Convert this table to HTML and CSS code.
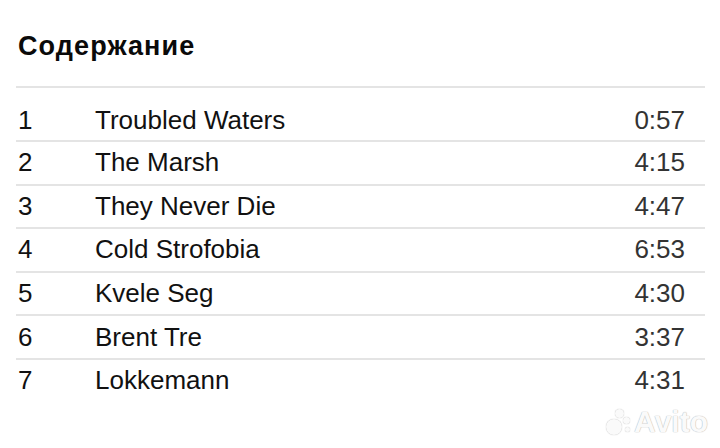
FILE: index.html
```html
<!DOCTYPE html>
<html>
<head>
<meta charset="utf-8">
<link rel="stylesheet" href="styles.css">
</head>
<body>
<div class="page">
  <h1 class="title">Содержание</h1>
  <div class="tracks">
    <div class="row first"><span class="num">1</span><span class="name">Troubled Waters</span><span class="time">0:57</span></div>
    <div class="row"><span class="num">2</span><span class="name">The Marsh</span><span class="time">4:15</span></div>
    <div class="row"><span class="num">3</span><span class="name">They Never Die</span><span class="time">4:47</span></div>
    <div class="row"><span class="num">4</span><span class="name">Cold Strofobia</span><span class="time">6:53</span></div>
    <div class="row"><span class="num">5</span><span class="name">Kvele Seg</span><span class="time">4:30</span></div>
    <div class="row"><span class="num">6</span><span class="name">Brent Tre</span><span class="time">3:37</span></div>
    <div class="row last"><span class="num">7</span><span class="name">Lokkemann</span><span class="time">4:31</span></div>
  </div>
  <div class="watermark">
    <span class="dots"><i class="d1"></i><i class="d2"></i><i class="d3"></i><i class="d4"></i></span>
    <span class="wm-text">Avito</span>
  </div>
</div>
</body>
</html>
```
FILE: styles.css
```css
html, body {
  margin: 0;
  padding: 0;
  background: #ffffff;
}
body {
  width: 720px;
  height: 448px;
  overflow: hidden;
  font-family: "Liberation Sans", Arial, sans-serif;
  color: #111;
}
.page {
  position: relative;
  height: 448px;
  padding: 0 15px 0 16px;
}
.title {
  margin: 0;
  padding: 31px 0 0 2px;
  height: 86px;
  box-sizing: border-box;
  font-size: 27px;
  letter-spacing: 1.1px;
  font-weight: bold;
  line-height: 30px;
  color: #0a0a0a;
}
.tracks {
  border-top: 2px solid #e4e4e4;
}
.row {
  display: flex;
  align-items: center;
  height: 41.6px;
  border-bottom: 2px solid #e4e4e4;
  font-size: 26px;
  color: #111;
}
.row.first {
  height: 54px;
  padding-top: 12px;
  box-sizing: border-box;
}
.row.last {
  border-bottom: none;
}
.num {
  width: 77px;
  padding-left: 2px;
}
.name {
  flex: 1;
}
.time {
  color: #333;
  padding-right: 20px;
}
.watermark {
  position: absolute;
  right: 12px;
  bottom: 9px;
  display: flex;
  align-items: center;
  gap: 2px;
}
.wm-text {
  font-size: 30px;
  font-weight: bold;
  color: #fafafa;
  text-shadow: 0 0 1px #bbb, 0 0 1px #bbb;
}
.dots {
  position: relative;
  width: 28px;
  height: 28px;
}
.dots i {
  position: absolute;
  border-radius: 50%;
  background: #fafafa;
  box-shadow: 0 0 1px 0 #b0b0b0;
}
.d1 { width: 16px; height: 16px; left: 2px; top: 11px; }
.d2 { width: 9px; height: 9px; left: 11px; top: 1px; }
.d3 { width: 7px; height: 7px; left: 19px; top: 9px; }
.d4 { width: 5px; height: 5px; left: 21px; top: 19px; }
```
